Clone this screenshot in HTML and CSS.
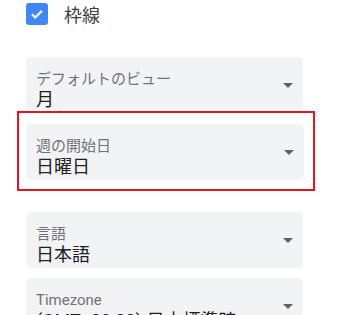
FILE: index.html
```html
<!DOCTYPE html>
<html lang="ja">
<head>
    <meta charset="UTF-8">
    <title>設定</title>
    <link rel="stylesheet" href="styles.css">
</head>
<body>
<div class="settings">
    <label class="check">
        <span class="box">
            <svg width="16" height="16" viewBox="0 0 16 16"><path d="M3 8.3l3.2 3.2L13 4.7" fill="none" stroke="#fff" stroke-width="2.2"/></svg>
        </span>
        <span class="check-text">枠線</span>
    </label>

    <div class="sel sel-cut">
        <div class="sel-body">
            <div class="sel-label">デフォルトのビュー</div>
            <div class="sel-value">月</div>
        </div>
        <span class="arrow"></span>
    </div>

    <div class="mark">
        <div class="sel">
            <div class="sel-body">
                <div class="sel-label">週の開始日</div>
                <div class="sel-value">日曜日</div>
            </div>
            <span class="arrow"></span>
        </div>
    </div>

    <div class="sel sel-lang">
        <div class="sel-body">
            <div class="sel-label">言語</div>
            <div class="sel-value">日本語</div>
        </div>
        <span class="arrow"></span>
    </div>

    <div class="sel sel-tz">
        <div class="sel-body">
            <div class="sel-label">Timezone</div>
            <div class="sel-value">(GMT+09:00) 日本標準時</div>
        </div>
        <span class="arrow"></span>
    </div>
</div>
</body>
</html>
```

FILE: styles.css
```css
*{
    margin: 0;
    padding: 0;
    box-sizing: border-box;
}
body{
    background: #fff;
    font-family: Roboto, "Noto Sans CJK JP", sans-serif;
    overflow: hidden;
}
.settings{
    width: 303px;
    padding: 3px 0 0 26px;
}
/* チェックボックス */
.check{
    display: flex;
    align-items: center;
    height: 22px;
}
.box{
    width: 22px;
    height: 22px;
    border-radius: 3px;
    background: #4285f4;
    display: flex;
    align-items: center;
    justify-content: center;
}
.check-text{
    margin-left: 16px;
    font-size: 18px;
    color: #3c4043;
}
/* セレクト */
.sel{
    height: 56px;
    background: #f1f3f4;
    border-radius: 5px;
    display: flex;
    align-items: center;
    padding: 0 10px 0 10px;
    overflow: hidden;
}
.sel-body{
    flex: 1;
    align-self: flex-start;
    padding-top: 13px;
}
.sel-label{
    font-size: 15px;
    line-height: 18px;
    color: #6f7378;
}
.sel-value{
    margin-top: 1px;
    font-size: 18px;
    line-height: 22px;
    color: #202124;
    white-space: nowrap;
}
.arrow{
    width: 0;
    height: 0;
    border-left: 5px solid transparent;
    border-right: 5px solid transparent;
    border-top: 5px solid #5f6368;
}
.sel-cut{
    margin-top: 32px;
    height: 52px;
    border-radius: 5px 5px 0 0;
}
.sel-cut .arrow{
    margin-top: 5px;
}
/* 赤枠 */
.mark{
    margin: 2px -12px 0 -9px;
    padding: 11px 9px 9px 7px;
    border: 2px solid #e8141c;
}
.sel-lang{
    margin-top: 21px;
}
.sel-tz{
    margin-top: 10px;
}
```
